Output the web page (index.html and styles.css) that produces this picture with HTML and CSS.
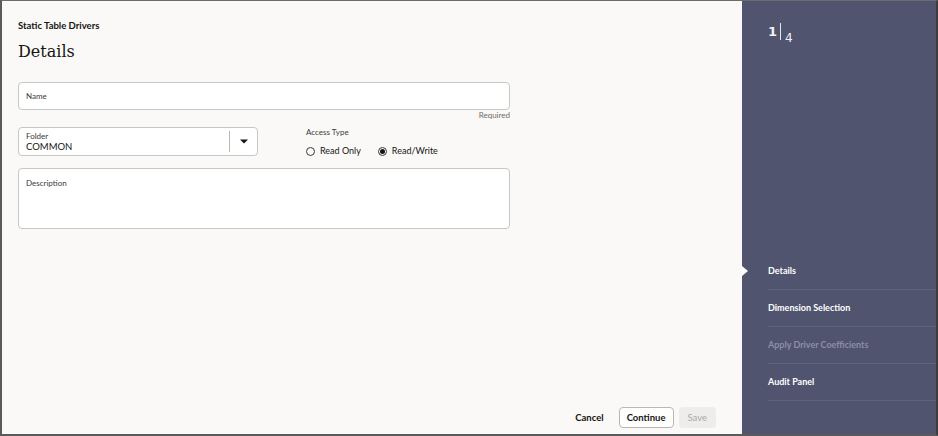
FILE: index.html
```
<!DOCTYPE html>
<html>
<head>
<meta charset="utf-8">
<link rel="stylesheet" href="styles.css">
</head>
<body>
<div class="frame">
  <div class="main">
    <div class="crumb">Static Table Drivers</div>
    <h1 class="title">Details</h1>
    <div class="form">
      <div class="field name-field"><span class="label">Name</span></div>
      <div class="required">Required</div>
      <div class="row">
        <div class="field folder-field">
          <div class="folder-text">
            <span class="label">Folder</span>
            <span class="value">COMMON</span>
          </div>
          <div class="sep"></div>
          <div class="caret"><svg width="8" height="5" viewBox="0 0 8 5"><path d="M0 0.5 H8 L4 4.5 Z" fill="#161513"/></svg></div>
        </div>
        <div class="access">
          <div class="label">Access Type</div>
          <div class="radios">
            <label class="radio"><span class="dot"></span>Read Only</label>
            <label class="radio"><span class="dot on"></span>Read/Write</label>
          </div>
        </div>
      </div>
      <div class="field desc-field"><span class="label">Description</span></div>
    </div>
    <div class="spacer"></div>
    <div class="footer">
      <button class="btn link">Cancel</button>
      <button class="btn outline">Continue</button>
      <button class="btn disabled">Save</button>
    </div>
  </div>
  <div class="side">
    <div class="counter"><span class="cur">1</span><span class="bar"></span><span class="tot">4</span></div>
    <div class="spacer"></div>
    <ul class="steps">
      <li class="step active">Details</li>
      <li class="step">Dimension Selection</li>
      <li class="step muted">Apply Driver Coefficients</li>
      <li class="step">Audit Panel</li>
    </ul>
  </div>
</div>
</body>
</html>
```
FILE: styles.css
```
* { box-sizing: border-box; }
html, body { margin: 0; padding: 0; }
body {
  font-family: Lato, "Open Sans", sans-serif;
  color: #161513;
  width: 938px;
  height: 436px;
  overflow: hidden;
}
.frame {
  width: 938px;
  height: 436px;
  display: flex;
  border-top: 1px solid #6b6b6b;
  border-left: 2px solid #5a5a5a;
  border-right: 2px solid #3c3c3c;
  border-bottom: 2px solid #5a5a5a;
}
.main {
  flex: 1;
  background: #faf9f8;
  display: flex;
  flex-direction: column;
  padding: 18px 26px 6px 16px;
}
.crumb {
  font-size: 9.5px;
  font-weight: 700;
  line-height: 14px;
}
.title {
  font-family: "DejaVu Serif", "Liberation Serif", serif;
  font-weight: normal;
  font-size: 16px;
  line-height: 24px;
  margin: 7px 0 0 0;
}
.form {
  width: 492px;
  margin-top: 18px;
  font-size: 8px;
}
.field {
  background: #fff;
  border: 1px solid #c9c7c4;
  border-radius: 4px;
}
.label {
  display: block;
  font-size: 8px;
  color: #3b3936;
  line-height: 10px;
}
.name-field {
  height: 28px;
  display: flex;
  align-items: center;
  padding-left: 7px;
}
.required {
  text-align: right;
  font-size: 8px;
  color: #6f6c68;
  line-height: 10px;
  margin-top: 0;
}
.row {
  display: flex;
  margin-top: 7px;
}
.folder-field {
  width: 240px;
  height: 29px;
  display: flex;
  align-items: stretch;
}
.folder-text {
  flex: 1;
  display: flex;
  flex-direction: column;
  justify-content: center;
  padding-left: 7px;
}
.folder-text .label { line-height: 10px; }
.value {
  font-size: 9.5px;
  line-height: 11px;
}
.sep {
  width: 1px;
  background: #b9b7b4;
  margin: 3px 0;
}
.caret {
  width: 27px;
  display: flex;
  align-items: center;
  justify-content: center;
}
.access {
  margin-left: 48px;
}
.radios {
  display: flex;
  margin-top: 8px;
  gap: 17px;
}
.radio {
  display: flex;
  align-items: center;
  font-size: 9px;
  line-height: 12px;
}
.dot {
  width: 9px;
  height: 9px;
  border: 1px solid #3b3936;
  border-radius: 50%;
  margin-right: 5px;
  display: inline-flex;
  align-items: center;
  justify-content: center;
}
.dot.on::after {
  content: "";
  width: 5px;
  height: 5px;
  border-radius: 50%;
  background: #161513;
}
.desc-field {
  height: 61px;
  margin-top: 11px;
  padding: 9px 7px;
}
.spacer { flex: 1; }
.footer {
  display: flex;
  justify-content: flex-end;
  align-items: center;
  gap: 5px;
}
.btn {
  font-family: Lato, "Open Sans", sans-serif;
  font-size: 9.5px;
  font-weight: 700;
  height: 21px;
  border-radius: 4px;
  padding: 0 7px;
  background: transparent;
  border: 1px solid transparent;
  color: #161513;
}
.btn.link { margin-right: 2px; }
.btn.outline { border-color: #b9b7b4; background: #fff; }
.btn.disabled { background: #efedeb; color: #a9a7a4; font-weight: 400; padding: 0 8px; }
.side {
  width: 194px;
  background: #50546f;
  color: #fff;
  display: flex;
  flex-direction: column;
  padding-bottom: 33px;
}
.counter {
  margin: 22px 0 0 26px;
  display: flex;
  align-items: flex-start;
  font-family: "DejaVu Sans", sans-serif;
  color: #f2f2f2;
}
.cur { font-size: 13px; line-height: 17px; font-weight: bold; }
.bar { width: 1px; height: 17px; background: #e6e6e6; margin: 0 4px 0 3px; }
.tot { font-size: 12px; line-height: 14px; margin-top: 8px; }
.steps {
  list-style: none;
  margin: 0;
  padding: 0;
}
.step {
  position: relative;
  margin-left: 26px;
  height: 37px;
  line-height: 36px;
  border-bottom: 1px solid #5e6280;
  font-size: 9px;
  font-weight: 700;
  color: #fff;
}
.step.muted { color: #8c8fa6; }
.step.active::before {
  content: "";
  position: absolute;
  left: -26px;
  top: 13px;
  border-top: 5.5px solid transparent;
  border-bottom: 5.5px solid transparent;
  border-left: 6px solid #fff;
}
```
